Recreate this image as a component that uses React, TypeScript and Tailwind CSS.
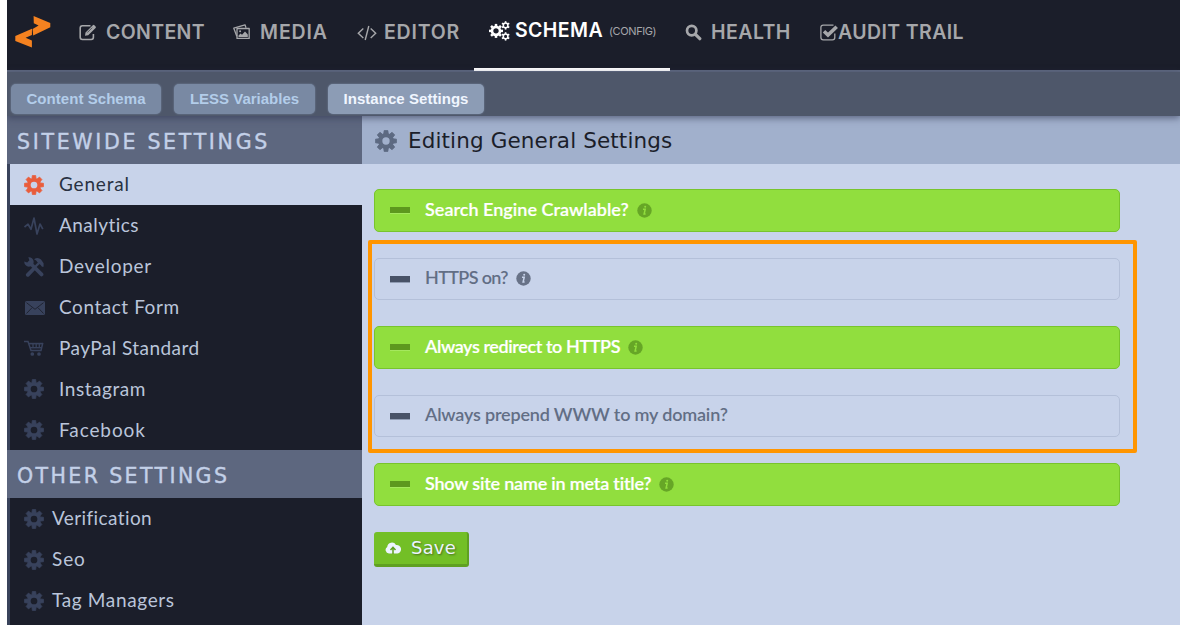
import type { ReactNode } from 'react';

const GEAR_ANGLES = [0, 45, 90, 135, 180, 225, 270, 315];

function Gear({ className }: { className: string }) {
  return (
    <svg viewBox="-10 -10 20 20" className={className} fill="none" stroke="currentColor">
      <circle r="5.2" strokeWidth="3.7" />
      {GEAR_ANGLES.map((a) => (
        <path key={a} d="M-2.1 -6.3 L-1.7 -9.5 L1.7 -9.5 L2.1 -6.3 Z" fill="currentColor" strokeWidth="0.7" strokeLinejoin="round" transform={`rotate(${a})`} />
      ))}
    </svg>
  );
}

function Logo() {
  return (
    <svg viewBox="0 0 36 32" className="h-8 w-9 shrink-0" fill="#f58220">
      <path d="M18.6 0 L35.3 7 V11.2 L18.2 19.4 L17.6 13 L23.6 9.4 L18.8 7.2 Z" />
      <path d="M17 12.8 L16.9 19 L10.6 21.8 L16.9 24.4 V31.6 L0.3 25 V20 Z" />
    </svg>
  );
}

function EditIcon() {
  return (
    <svg viewBox="0 0 18 17" className="mb-0.5 mr-[9px] h-[17px] w-[18px] shrink-0" fill="none" stroke="currentColor">
      <path d="M11.5 1.7 H3.4 Q1.2 1.7 1.2 4 V13.3 Q1.2 15.5 3.4 15.5 H12.2 Q14.4 15.5 14.4 13.3 V10" strokeWidth="1.6" />
      <path d="M6 11.8 L6.5 8.6 L13.8 1.2 Q14.6 0.5 15.4 1.2 L16.6 2.4 Q17.3 3.1 16.6 3.9 L9.2 11.3 Z" fill="currentColor" stroke="none" />
      <path d="M8.3 8.6 L13.2 3.7" stroke="#1b1e2a" strokeWidth="0.6" />
    </svg>
  );
}

function SearchIcon() {
  return (
    <svg viewBox="0 0 17 17" className="mb-0.5 mr-[9px] size-[17px] shrink-0" fill="none" stroke="currentColor">
      <circle cx="6.7" cy="6.6" r="4.7" strokeWidth="2.7" />
      <path d="M10.4 10.3 L14.8 14.7" strokeWidth="3.2" strokeLinecap="round" />
    </svg>
  );
}

function MediaIcon() {
  return (
    <svg viewBox="0 0 17 16" className="mb-0.5 h-4 w-[17px] shrink-0" fill="none" stroke="currentColor" strokeWidth="1.3" strokeLinejoin="round">
      <path d="M3.8 12.3 L0.8 4.2 L12 0.8 L13 3.8" />
      <path d="M4 4.5 H16.2 V14.4 H4 Z" />
      <path d="M5.5 13 V11.5 L7.6 9.6 L9 10.8 L12 7.5 L14.8 10.5 V13 Z" fill="currentColor" stroke="none" />
      <circle cx="7.1" cy="7.3" r="1" fill="currentColor" stroke="none" />
    </svg>
  );
}

function CodeIcon() {
  return (
    <svg viewBox="0 0 20 16" className="h-4 w-5 shrink-0" fill="none" stroke="currentColor" strokeWidth="1.4">
      <path d="M6.3 3.5 L1.3 8.2 L6.3 13 M13.7 3.5 L18.7 8.2 L13.7 13 M11.8 1 L8.2 15" />
    </svg>
  );
}

function CogsIcon() {
  return (
    <svg viewBox="0 0 21 20" className="h-5 w-[21px] shrink-0" fill="none" stroke="currentColor">
      <g transform="translate(7 9.9)">
        <circle r="4" strokeWidth="2.6" />
        {GEAR_ANGLES.map((a) => (
          <path key={a} d="M0 -4.8 V-7" strokeWidth="2.5" transform={`rotate(${a})`} />
        ))}
      </g>
      {[4.4, 15.4].map((y) => (
        <g key={y} transform={`translate(16.6 ${y})`}>
          <circle r="2.3" strokeWidth="1.5" />
          {[0, 60, 120, 180, 240, 300].map((a) => (
            <path key={a} d="M0 -2.6 V-4.2" strokeWidth="1.6" transform={`rotate(${a})`} />
          ))}
        </g>
      ))}
    </svg>
  );
}

function CheckIcon() {
  return (
    <svg viewBox="0 0 18 17" className="mb-px h-[17px] w-[18px] shrink-0" fill="none" stroke="currentColor">
      <path d="M13.5 1.2 H3.3 Q0.9 1.2 0.9 3.6 V13.4 Q0.9 15.8 3.3 15.8 H12.5 Q14.8 15.8 14.8 13.4 V9.5" strokeWidth="1.3" />
      <path d="M4 7.3 L8 11.1 L16.7 2.8" strokeWidth="3.6" />
    </svg>
  );
}

function PulseIcon() {
  return (
    <svg viewBox="0 0 20 20" className="h-5 w-5" fill="none" stroke="currentColor" strokeWidth="1.7" strokeLinejoin="round">
      <path d="M0.5 11 L4 8.2 L7 13.3 L10 2 L13 18 L16 8 L18.8 13.2" />
    </svg>
  );
}

function ToolsIcon() {
  return (
    <svg viewBox="0 0 20 20" className="h-5 w-5" fill="none" stroke="currentColor">
      <path d="M3.8 17.8 L9 12.5 M6.5 6.5 L17.5 17.4" strokeWidth="3.8" strokeLinecap="round" />
      <path d="M10.5 10.5 L15.5 5.5" strokeWidth="2.4" />
      <path d="M10 2.2 Q14 -0.4 17 2.5 L19.6 6.3 V9.8 H18 L16.6 8 L13.5 5.2 Q12.5 3 10 2.2 Z" fill="currentColor" stroke="none" />
      <path d="M4.3 0.3 A4.7 4.7 0 1 1 0.3 4.5 L3.2 5.5 L5.4 3.2 Z" fill="currentColor" stroke="none" />
    </svg>
  );
}

function MailIcon() {
  return (
    <svg viewBox="0 0 20 14" className="ml-px h-3.5 w-5">
      <rect width="20" height="14" rx="1.6" fill="currentColor" />
      <path d="M1.5 1.7 L10 8.3 L18.5 1.7 M1.5 12.5 L7 6.7 M18.5 12.5 L13 6.7" fill="none" stroke="#1d202c" strokeWidth="0.9" />
    </svg>
  );
}

function CartIcon() {
  return (
    <svg viewBox="0 0 20 16" className="mb-0.5 h-4 w-5" fill="none" stroke="currentColor" strokeWidth="1.5">
      <path d="M0 1.4 H4 L7 10.6 H17 L18.8 2.8" />
      <path d="M5 3.6 H18.6" strokeWidth="1.6" />
      <path d="M6 7.7 H17.6" strokeWidth="1.4" />
      <path d="M9 4 V8 M12.2 4 V8 M15.3 4 V8" strokeWidth="1.3" />
      <circle cx="8.3" cy="14" r="1.1" fill="currentColor" />
      <circle cx="15" cy="14" r="1.1" fill="currentColor" />
    </svg>
  );
}

function InfoIcon({ on }: { on: boolean }) {
  return (
    <svg viewBox="0 0 15 15" className="ml-2 h-[15px] w-[15px] shrink-0">
      <circle cx="7.5" cy="7.5" r="7.2" fill={on ? '#66a626' : '#687287'} />
      <path d="M6 6.2 H8.2 L7.1 11 H8.6" fill="none" stroke={on ? '#91de3e' : '#c8d3ea'} strokeWidth="1.5" />
      <circle cx="8.2" cy="3.8" r="1" fill={on ? '#91de3e' : '#c8d3ea'} />
    </svg>
  );
}

function SideHeading({ children, tracking }: { children: ReactNode; tracking: string }) {
  return (
    <h2 className={`flex h-12 shrink-0 items-center whitespace-nowrap bg-[#5d677f] pl-2.5 pt-[5px] font-['DejaVu_Sans',sans-serif] text-[20.5px] text-[#c3d0e8] [-webkit-text-stroke:0.4px_#c3d0e8] ${tracking}`}>
      {children}
    </h2>
  );
}

interface SideItemProps {
  icon: ReactNode;
  label: string;
  active?: boolean;
  near?: boolean;
  tracking: string;
}

function SideItem({ icon, label, active, near, tracking }: SideItemProps) {
  return (
    <li className={`ml-[3px] flex h-[40.9px] shrink-0 items-center pl-3.5 ${active ? 'bg-[#c8d3ea]' : ''}`}>
      <span className={`flex h-5 w-[21px] items-center pt-px ${active ? 'text-[#e95d3c]' : 'text-[#38425c]'}`}>{icon}</span>
      <span className={`whitespace-nowrap font-[Lato,sans-serif] text-[19px] ${near ? 'ml-[7px]' : 'ml-3.5'} ${active ? 'text-[#293142]' : 'text-[#bac5da]'} ${tracking}`}>
        {label}
      </span>
    </li>
  );
}

function Setting({ label, on = false, info = false, tracking }: { label: string; on?: boolean; info?: boolean; tracking: string }) {
  return (
    <div className={`flex h-[42.5px] w-[746px] items-center rounded-[5px] border pl-[15px] ${on ? 'border-[#78c42c] bg-[#91de3e] text-white' : 'border-[#b4c0d9] text-[#626e85]'}`}>
      <span className={`h-1.5 w-5 shrink-0 ${on ? 'bg-[#5d981e] shadow-[0_1px_0_#a5e85e]' : 'bg-[#485267] shadow-[0_1px_0_#919db4]'}`} />
      <span className={`ml-[15px] whitespace-nowrap pb-0.5 font-[Lato,sans-serif] text-[18px] font-semibold ${on ? '[-webkit-text-stroke:0.2px_currentColor]' : ''} ${tracking}`}>{label}</span>
      {info && <InfoIcon on={on} />}
    </div>
  );
}

export default function App() {
  const gear = <Gear className="h-5 w-5" />;
  return (
    <div className="h-[631px] w-[1186px] overflow-hidden bg-white pl-[7px]">
      <div className="flex h-[624.5px] w-[1173px] flex-col overflow-hidden">
        <header className="flex h-[72px] shrink-0 border-b-2 border-[#5f6980] bg-[#1b1e2a] font-[Inter,sans-serif] text-[19.5px] font-semibold text-[#a6a7aa]">
          <div className="flex h-16 w-[72px] shrink-0 items-center pl-2">
            <Logo />
          </div>
          <nav className="flex h-[66px] items-center whitespace-nowrap">
            <a className="flex w-[154px] items-center">
              <EditIcon />
              <span className="tracking-[0.35px]">CONTENT</span>
            </a>
            <a className="flex w-[124px] items-center">
              <MediaIcon />
              <span className="ml-2.5 tracking-[0.9px]">MEDIA</span>
            </a>
            <a className="flex w-[117px] items-center">
              <CodeIcon />
              <span className="ml-[7px] tracking-[0.8px]">EDITOR</span>
            </a>
            <a className="flex h-[71px] w-[196px] items-center self-start border-b-[3px] border-white pb-1.5 pl-[15px] text-white">
              <CogsIcon />
              <span className="ml-[5px] tracking-[0.4px]">SCHEMA</span>
              <span className="ml-1.5 text-[11px] font-normal tracking-[-0.4px] text-[#a6a7aa]">(CONFIG)</span>
            </a>
            <a className="ml-[15px] flex w-[135px] items-center">
              <SearchIcon />
              <span className="tracking-[0.45px]">HEALTH</span>
            </a>
            <a className="flex items-center">
              <CheckIcon />
              <span className="tracking-[0.4px]">AUDIT TRAIL</span>
            </a>
          </nav>
        </header>

        <div className="z-10 flex h-11 shrink-0 items-center bg-[#4e576a] pl-1 pt-[10px] font-['Liberation_Sans',sans-serif] text-[15px] font-bold text-[#b3cdea] shadow-[0_2px_7px_rgba(50,55,85,0.65)]">
          <a className="flex h-[30px] w-[150px] items-center justify-center rounded-[5px] bg-[#7989a3] tracking-[0.05px] shadow-[0_0_2px_#7989a3]">Content Schema</a>
          <a className="ml-[13px] flex h-[30px] w-[141px] items-center justify-center rounded-[5px] bg-[#7989a3] shadow-[0_0_2px_#7989a3]">LESS Variables</a>
          <a className="ml-[13px] flex h-[30px] w-[156px] items-center justify-center rounded-[5px] bg-[#8c9cb5] tracking-[0.05px] text-[#f0f6ff] shadow-[0_0_2px_#7989a3]">Instance Settings</a>
        </div>

        <div className="flex min-h-0 flex-1">
          <aside className="flex w-[355px] shrink-0 flex-col overflow-hidden bg-[#1b1e2a] shadow-[inset_3px_0_0_#39435b]">
            <SideHeading tracking="tracking-[2.7px]">SITEWIDE SETTINGS</SideHeading>
            <ul className="shrink-0">
              <SideItem active icon={gear} label="General" tracking="tracking-[0.8px]" />
              <SideItem icon={<PulseIcon />} label="Analytics" tracking="tracking-[0.45px]" />
              <SideItem icon={<ToolsIcon />} label="Developer" tracking="tracking-[0.7px]" />
              <SideItem icon={<MailIcon />} label="Contact Form" tracking="tracking-[0.55px]" />
              <SideItem icon={<CartIcon />} label="PayPal Standard" tracking="tracking-[0.45px]" />
              <SideItem icon={gear} label="Instagram" tracking="tracking-[0.55px]" />
              <SideItem icon={gear} label="Facebook" tracking="tracking-[0.9px]" />
            </ul>
            <SideHeading tracking="tracking-[2.4px]">OTHER SETTINGS</SideHeading>
            <ul className="shrink-0">
              <SideItem near icon={gear} label="Verification" tracking="tracking-[0.4px]" />
              <SideItem near icon={gear} label="Seo" tracking="tracking-[0.9px]" />
              <SideItem near icon={gear} label="Tag Managers" tracking="tracking-[0.65px]" />
            </ul>
          </aside>

          <main className="flex flex-1 flex-col bg-[#c8d3ea]">
            <h1 className="flex h-12 shrink-0 items-center bg-[#a1b0cc] pl-[13px] pt-0.5 font-['DejaVu_Sans',sans-serif] text-[21.5px] text-[#1b1e2a]">
              <Gear className="size-[22px] text-[#5d6a82]" />
              <span className="ml-[11px] whitespace-nowrap tracking-[0.12px]">Editing General Settings</span>
            </h1>
            <form className="flex flex-col gap-[26px] pl-3 pt-[25px]">
              <Setting on info label="Search Engine Crawlable?" tracking="tracking-[0.02px]" />
              <div className="relative flex flex-col gap-[26px]">
                <Setting info label="HTTPS on?" tracking="tracking-[-0.65px]" />
                <Setting on info label="Always redirect to HTTPS" tracking="tracking-[-0.4px]" />
                <Setting label="Always prepend WWW to my domain?" tracking="tracking-[-0.18px]" />
                <div className="pointer-events-none absolute -left-1.5 -top-[18px] h-[213px] w-[769px] rounded-[2px] border-4 border-[#ff9500]" />
              </div>
              <Setting on info label="Show site name in meta title?" tracking="tracking-[-0.2px]" />
              <button type="button" className="flex h-[35px] w-[95px] items-center rounded-[3px] border-b-[3px] border-r-2 border-[#5fa021] bg-[#73bf26] pl-[11px] font-['DejaVu_Sans',sans-serif] text-[18px] text-[#edf4ff] [text-shadow:1px_1px_2px_#47701f]">
                <svg viewBox="0 0 16 12" className="mt-px h-3 w-4 shrink-0">
                  <path d="M4 11.5 A3.6 3.6 0 0 1 2.2 4.9 A4.7 4.7 0 0 1 11 3 A4.3 4.3 0 0 1 12.5 11.5 Z" fill="currentColor" />
                  <path d="M8 12 V6.5 M5.5 8 L8 5.3 L10.5 8" fill="none" stroke="#5fa021" strokeWidth="1.5" />
                </svg>
                <span className="ml-2.5 tracking-[0.2px]">Save</span>
              </button>
            </form>
          </main>
        </div>
      </div>
    </div>
  );
}
